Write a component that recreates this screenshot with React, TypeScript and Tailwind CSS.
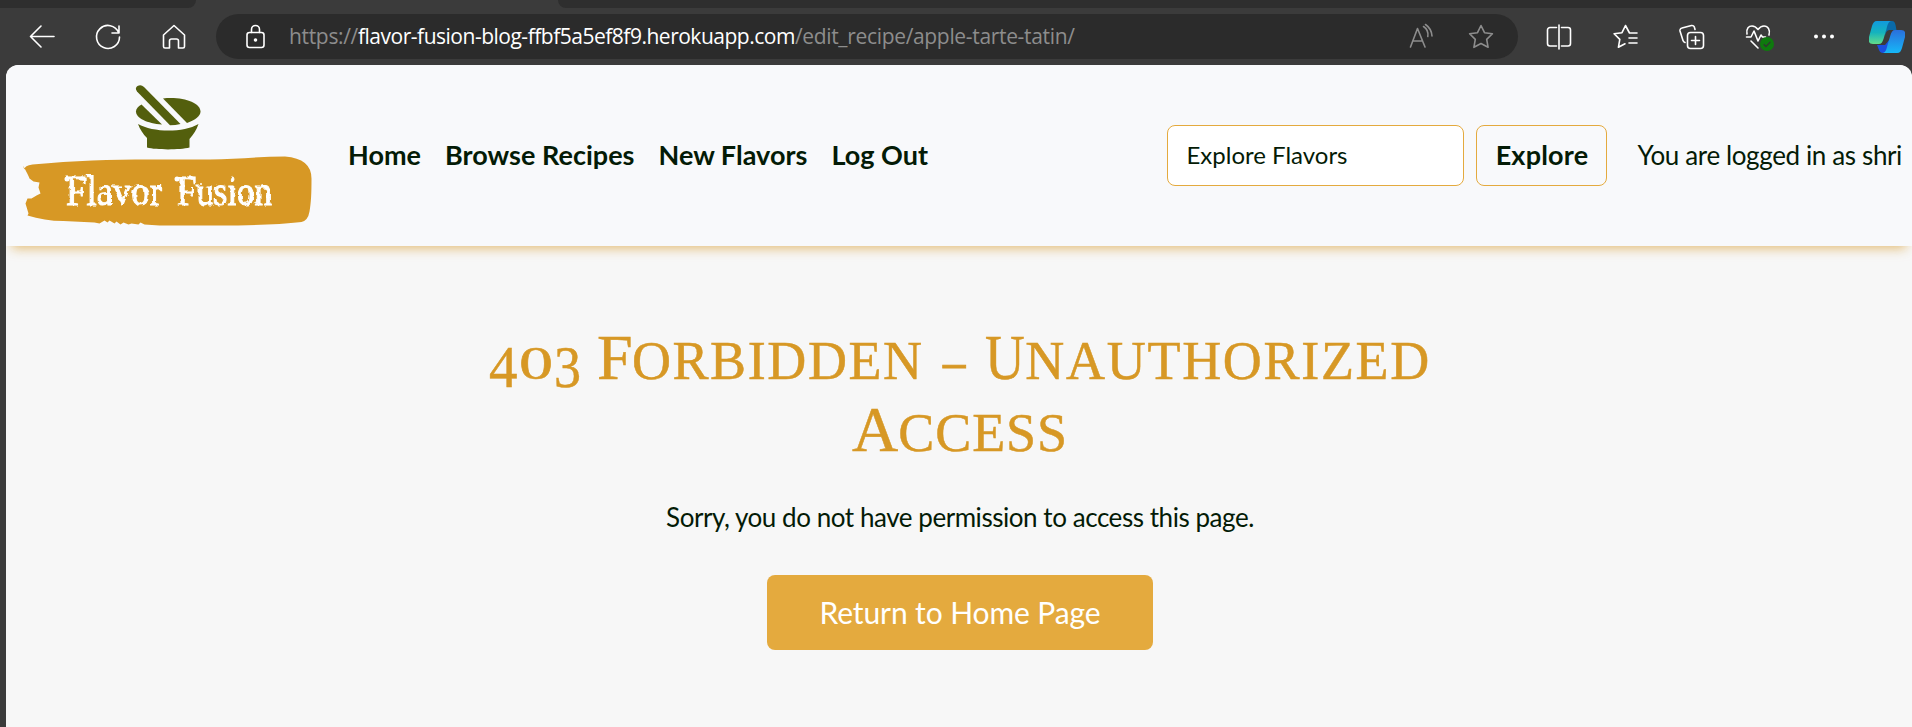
import React from 'react';

const ICON = 'h-[30px] w-[30px] shrink-0';

function Icon({ children, className = '', sw = 1.6 }: { children: React.ReactNode; className?: string; sw?: number }) {
  return (
    <svg viewBox="0 0 30 30" className={`${ICON} ${className}`} fill="none" stroke="currentColor" strokeWidth={sw} strokeLinecap="round" strokeLinejoin="round">
      {children}
    </svg>
  );
}

const STAR = 'M15 3.5l3.5 7.2 7.9 1.1-5.7 5.6 1.4 7.9-7.1-3.8-7.1 3.8 1.4-7.9-5.7-5.6 7.9-1.1z';

function BrowserBar() {
  return (
    <div className="bg-[#3b3b3b]">
      <div className="flex h-2 bg-[#3b3b3b]">
        <div className="w-[196px] rounded-br-lg bg-[#2e2e2e]" />
        <div className="w-[362px]" />
        <div className="flex-1 rounded-bl-lg bg-[#2e2e2e]" />
      </div>
      <div className="flex h-[57px] items-start pt-1.5 pl-[27px] text-white">
        <div className="flex h-[45px] items-center">
          <Icon>
            <path d="M27 14.5H3.500M14 4L3.500 14.500 14 25" />
          </Icon>
          <Icon className="ml-9">
            <path d="M25.600 10.500A11.500 11.500 0 1 0 26.500 15M26 4v7h-7" />
          </Icon>
          <Icon className="ml-9">
            <path d="M4.500 13L15 3.500 25.500 13v11.500a1.500 1.500 0 0 1-1.500 1.500h-4.500v-7a2 2 0 0 0-2-2h-5a2 2 0 0 0-2 2v7H6a1.500 1.500 0 0 1-1.500-1.500z" />
          </Icon>
        </div>
        <div className="ml-[27px] flex h-[45px] w-[1302px] items-center rounded-full bg-[#2b2b2b] pl-6">
          <Icon>
            <rect x="7" y="10.500" width="17" height="15" rx="2.500" />
            <path d="M11.500 10.500V7.500a4 4 0 0 1 8 0v3" />
            <circle cx="15.500" cy="18" r="1" fill="currentColor" />
          </Icon>
          <div className="mt-px ml-[19px] w-[1114px] text-[21px] tracking-[-0.33px] whitespace-nowrap text-[#8d8d8d] [font-family:'Open_Sans','Noto_Sans',sans-serif]">
            https://<span className="tracking-[-0.49px] text-white">flavor-fusion-blog-ffbf5a5ef8f9.herokuapp.com</span>/edit_recipe/apple-tarte-tatin/
          </div>
          <Icon className="ml-1 text-[#8d8d8d]">
            <path d="M3.500 25L10.500 6.500 18 25M6 19h9.500M16.500 4.500a10 10 0 0 1 4.300 10M18.500 2.500a15 15 0 0 1 6.500 11.500" />
          </Icon>
          <Icon className="ml-[29px] text-[#8d8d8d]">
            <path d={STAR} />
          </Icon>
        </div>
        <div className="ml-[26px] flex h-[45px] items-center gap-9">
          <Icon>
            <path d="M12.500 5.500H6a2.500 2.500 0 0 0-2.500 2.500v13.500A2.500 2.500 0 0 0 6 24h6.500M15 3v24M17.500 5.500H24a2.500 2.500 0 0 1 2.500 2.500v13.500A2.500 2.500 0 0 1 24 24h-6.500" />
          </Icon>
          <Icon>
            <path d="M27 11h-7.500L15.500 3.500 12 10.700l-7.900 1.100 5.700 5.600-1.400 7.900 6.600-3.500M19 16h8M19 21h8" />
          </Icon>
          <Icon>
            <rect x="11.500" y="10.500" width="16" height="16" rx="3" />
            <path d="M19.500 14.500v8M15.500 18.500h8M9 20.500a3 3 0 0 1-2-2L4 9a2.500 2.500 0 0 1 2-3L15.500 3.500a2.500 2.500 0 0 1 3 2l.5 2" />
          </Icon>
          <div className="relative flex">
            <Icon>
              <path d="M5 12C4 6 7 4 10 4c3 0 4.500 1.500 6 3.500C17.500 5.500 19 4 22 4c4 0 6.500 4 5 9M4.500 15h4.500l3-6 4 10 3-6 1.500 2h3M9 19l7 7" />
            </Icon>
            <svg viewBox="0 0 14 14" className="absolute top-[15px] left-[18px] h-[14px] w-[14px]">
              <circle cx="7" cy="7" r="7" fill="#0e7a0d" />
              <path d="M3.700 7.200L6 9.500l4.400-4.600" fill="none" stroke="#333" strokeWidth="1.300" />
            </svg>
          </div>
          <Icon>
            <g fill="currentColor" stroke="none">
              <circle cx="8" cy="14.500" r="2" />
              <circle cx="16" cy="14.500" r="2" />
              <circle cx="24" cy="14.500" r="2" />
            </g>
          </Icon>
        </div>
        <svg viewBox="0 0 36 32" className="mt-[7px] ml-[31px] h-8 w-9 shrink-0">
          <defs>
            <linearGradient id="cl" x1="0" y1="0" x2="0" y2="1">
              <stop offset="0" stopColor="#1199de" />
              <stop offset="0.500" stopColor="#15b3bd" />
              <stop offset="1" stopColor="#62dc8a" />
            </linearGradient>
            <linearGradient id="cr" x1="0" y1="0" x2="0" y2="1">
              <stop offset="0" stopColor="#2a6fdc" />
              <stop offset="1" stopColor="#16b8f8" />
            </linearGradient>
          </defs>
          <path d="M17 0h6c3 0 3.500 3 4.500 9H21c-3 0-4 2-5 6z" fill="#0a6aa8" />
          <path d="M8 24h8l5-6-3 14h-4c-4 0-4-4-6-8z" fill="#1b4fe0" />
          <path d="M8 0h14c-3 1-3.500 4-4.500 8l-3 10c-1 3-2 5-5 5H4c-4 0-5-3-4-7L3 5c1-3 2-5 5-5z" fill="url(#cl)" />
          <path d="M26 9h6c4 0 5 3 4 7l-3 11c-1 3-2 5-5 5H14c3-1 3.500-4 4.500-8l3-10c1-3 2-5 4.500-5z" fill="url(#cr)" />
        </svg>
      </div>
    </div>
  );
}

function Logo() {
  return (
    <svg viewBox="16 80 300 155" className="mt-1 h-[155px] w-[300px] shrink-0">
      <defs>
        <filter id="rough" x="-5%" y="-20%" width="110%" height="140%">
          <feTurbulence type="fractalNoise" baseFrequency="0.18" numOctaves="2" seed="4" result="n" />
          <feDisplacementMap in="SourceGraphic" in2="n" scale="4" />
        </filter>
      </defs>
      <g fill="#535f0d">
        <path d="M137 91.500q-2.500-3.500.5-5.500 3.500-2 6.500 1l36.500 37q-5 1.300-10.500 1.300z" />
        <path d="M163 98.500c20-2 37 4 37.500 13 0 4.500-5 8.500-13.500 11.500z" />
        <path d="M141.500 104.500l20.500 20c-15-1-26-6.500-26-13 0-3 2-5 5.500-7z" />
        <path d="M138 124c15 8.500 45 9 60.500 0-2 6-5 10-9 15v8.500c-10 2.500-33 2.500-42.500 0V138c-4-4-7-8.500-9-14z" />
      </g>
      <path
        fill="#d79825"
        d="M24.500 170q-1-4 8-5.500C75 160.500 110 159.500 150 159.500h60c25 0 50-3 75-3q27 2 26.500 23c0 14-.5 24-2 32q-1.500 9-8 10.500c-22 2.500-52 3.500-82 3.500h-60l-15-1-4-2-2 2-7-1-3 1-5-2-3 2-4-3-2 2-5-3-2 2-3-2-5 3-5-1-31-1.500c-13 0-25-2-36-5.500l1-2-3-10 2-5h4l5-3 4-2-2-6 1-5-6-1-4-3q-1-3-6.500-13z"
      />
      <g fill="#fff" stroke="#fff" strokeWidth="1" filter="url(#rough)" className="text-[42px] font-normal [font-family:'Liberation_Serif',serif]">
        <text x="66" y="205" textLength="96" lengthAdjust="spacingAndGlyphs">Flavor</text>
        <text x="177" y="205" textLength="95" lengthAdjust="spacingAndGlyphs">Fusion</text>
      </g>
      <g fill="#fff">
        <circle cx="67" cy="179" r="2.500" />
        <circle cx="82" cy="178" r="1.800" />
        <circle cx="177" cy="179" r="2.500" />
        <circle cx="192" cy="178" r="1.800" />
        <circle cx="90" cy="204" r="1" />
        <circle cx="112" cy="186" r="1" />
        <circle cx="160" cy="189" r="1.300" />
        <circle cx="201" cy="184" r="1" />
        <circle cx="232" cy="201" r="1" />
      </g>
    </svg>
  );
}

function Header() {
  return (
    <header className="relative flex h-[181px] items-center rounded-t-xl bg-[#f8f9fb] pl-2.5 text-[26px] text-[#041b06] shadow-[0_8px_12px_-6px_rgba(215,152,37,0.65)]">
      <Logo />
      <nav className="ml-8 flex gap-6 text-[27px] font-bold tracking-[0.02px] whitespace-nowrap">
        <a>Home</a>
        <a>Browse Recipes</a>
        <a>New Flavors</a>
        <a>Log Out</a>
      </nav>
      <form className="ml-auto flex items-center gap-3">
        <div className="flex h-[61px] w-[297px] items-center rounded-lg border border-[#e4aa3e] bg-white pb-0.5 pl-[18px] text-[24px]">Explore Flavors</div>
        <button className="h-[61px] w-[131px] rounded-lg border border-[#e4aa3e] text-[27px] font-bold tracking-[0.2px]">Explore</button>
      </form>
      <div className="mr-[10px] ml-[30px] tracking-[-0.37px] whitespace-nowrap">You are logged in as shri</div>
    </header>
  );
}

function Heading() {
  return (
    <h1 className="flex flex-col items-center text-[54px] leading-[72px] text-[#d79825] [-webkit-text-stroke:0.5px_#d79825] [font-family:'Liberation_Serif',serif]">
      <span className="flex h-[72px] w-[942px] items-baseline whitespace-nowrap">
        <span className="relative top-[8px] w-[30px] text-[60px]"><span className="inline-block origin-left scale-x-[0.95]">4</span></span>
        <span className="w-[35px]"><span className="inline-block origin-left scale-x-[1.45] text-[47px]">0</span></span>
        <span className="relative top-[8px] w-[43px] text-[60px]"><span className="inline-block origin-left scale-x-[0.9]">3</span></span>
        <span className="w-[35px] text-[64px]">F</span>
        <span className="w-[312px] tracking-[1.6px]">ORBIDDEN</span>
        <span className="w-[42px] tracking-normal"><span className="inline-block origin-left scale-x-[0.83] [-webkit-text-stroke:1px_#d79825]">–</span></span>
        <span className="w-[40px] text-[64px]"><span className="inline-block origin-left scale-x-[0.86]">U</span></span>
        <span className="tracking-[1.7px]">NAUTHORIZED</span>
      </span>
      <span className="flex h-[72px] items-baseline">
        <span className="text-[64px]">A</span>
        <span className="tracking-[0.9px]">CCESS</span>
      </span>
    </h1>
  );
}

export default function App() {
  return (
    <div className="flex h-[727px] w-[1912px] flex-col overflow-hidden bg-[#3b3b3b] [font-family:Lato,sans-serif]">
      <BrowserBar />
      <div className="ml-1.5 flex-1 overflow-hidden rounded-t-xl bg-[#f7f7f7]">
        <Header />
        <main className="flex flex-col items-center pt-[76px] pl-0.5">
          <Heading />
          <p className="mt-8 text-[26px] leading-[39px] tracking-[-0.45px] text-[#041b06]">Sorry, you do not have permission to access this page.</p>
          <button className="mt-[38px] h-[75px] w-[386px] rounded-lg bg-[#e4aa3e] text-[30px] tracking-[-0.1px] text-white">Return to Home Page</button>
        </main>
      </div>
    </div>
  );
}
